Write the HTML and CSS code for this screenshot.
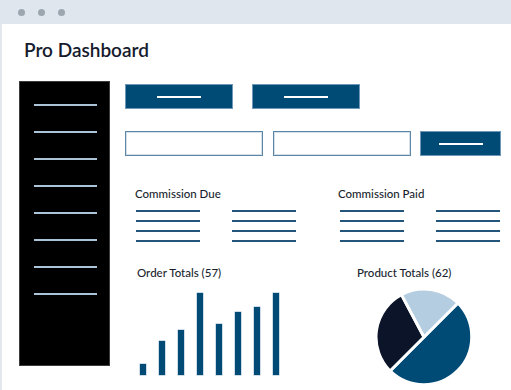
FILE: index.html
```html
<!DOCTYPE html>
<html lang="en">
<head>
  <meta charset="UTF-8" />
  <title>Pro Dashboard</title>
  <link rel="stylesheet" href="styles.css">
</head>
<body>
  <div class="window">
    <div class="titlebar">
      <span class="dot"></span>
      <span class="dot"></span>
      <span class="dot"></span>
    </div>

    <div class="page">
      <h1 class="page-title">Pro Dashboard</h1>

      <div class="layout">
        <nav class="sidebar">
          <span class="nav-line"></span>
          <span class="nav-line"></span>
          <span class="nav-line"></span>
          <span class="nav-line"></span>
          <span class="nav-line"></span>
          <span class="nav-line"></span>
          <span class="nav-line"></span>
          <span class="nav-line"></span>
        </nav>

        <main class="main">
          <div class="btn-row">
            <div class="btn btn-wide"><span class="btn-line"></span></div>
            <div class="btn btn-wide"><span class="btn-line"></span></div>
          </div>

          <div class="search-row">
            <div class="field"></div>
            <div class="field"></div>
            <div class="btn btn-small"><span class="btn-line"></span></div>
          </div>

          <div class="summary-row">
            <section class="summary">
              <h3 class="label">Commission Due</h3>
              <div class="line-cols">
                <div class="line-col">
                  <span class="row-line"></span>
                  <span class="row-line"></span>
                  <span class="row-line"></span>
                  <span class="row-line"></span>
                </div>
                <div class="line-col">
                  <span class="row-line"></span>
                  <span class="row-line"></span>
                  <span class="row-line"></span>
                  <span class="row-line"></span>
                </div>
              </div>
            </section>
            <section class="summary">
              <h3 class="label">Commission Paid</h3>
              <div class="line-cols">
                <div class="line-col">
                  <span class="row-line"></span>
                  <span class="row-line"></span>
                  <span class="row-line"></span>
                  <span class="row-line"></span>
                </div>
                <div class="line-col">
                  <span class="row-line"></span>
                  <span class="row-line"></span>
                  <span class="row-line"></span>
                  <span class="row-line"></span>
                </div>
              </div>
            </section>
          </div>

          <div class="chart-row">
            <section class="chart">
              <h3 class="label">Order Totals (57)</h3>
              <div class="bars">
                <span class="bar" style="height: 11px"></span>
                <span class="bar" style="height: 34px"></span>
                <span class="bar" style="height: 45px"></span>
                <span class="bar" style="height: 82px"></span>
                <span class="bar" style="height: 51px"></span>
                <span class="bar" style="height: 63px"></span>
                <span class="bar" style="height: 68px"></span>
                <span class="bar" style="height: 82px"></span>
              </div>
            </section>
            <section class="chart">
              <h3 class="label">Product Totals (62)</h3>
              <svg class="pie" width="100" height="100" viewBox="0 0 100 100">
                <path d="M50 50 L83.94 16.06 A48 48 0 0 1 16.06 83.94 Z" fill="#004b76" />
                <path d="M50 50 L16.06 83.94 A48 48 0 0 1 27.46 7.62 Z" fill="#0b1428" />
                <path d="M50 50 L27.46 7.62 A48 48 0 0 1 83.94 16.06 Z" fill="#b5cde0" />
              </svg>
            </section>
          </div>
        </main>
      </div>
    </div>
  </div>
</body>
</html>
```

FILE: styles.css
```css
body {
  margin: 0;
  font-family: 'Lato', 'Liberation Sans', sans-serif;
  background-color: white;
  color: #151b2d;
}
.window {
  width: 511px;
  height: 390px;
  overflow: hidden;
  display: flex;
  flex-direction: column;
}
.titlebar {
  height: 24px;
  background-color: #dfe6ed;
  display: flex;
  align-items: center;
  gap: 13px;
  padding-left: 18px;
  flex-shrink: 0;
}
.dot {
  width: 7px;
  height: 7px;
  border-radius: 50%;
  background-color: #9ba6ae;
}
.page {
  flex: 1;
  border-left: 2px solid #e3e7eb;
  padding-top: 14px;
}
.page-title {
  margin: 0 0 0 22px;
  font-size: 19px;
  line-height: 24px;
  font-weight: 600;
}
.layout {
  display: flex;
  align-items: flex-start;
  margin: 19px 0 0 17px;
}
.sidebar {
  width: 91px;
  height: 285px;
  box-sizing: border-box;
  background-color: #000;
  border: 1px solid #3c3c3c;
  padding: 22px 0 0 14px;
  display: flex;
  flex-direction: column;
  gap: 25px;
  flex-shrink: 0;
}
.nav-line {
  width: 63px;
  height: 2px;
  background-color: #abc4d8;
}
.main {
  margin: 3px 0 0 15px;
  width: 376px;
}
.btn-row {
  display: flex;
  gap: 19px;
}
.btn {
  height: 25px;
  box-sizing: border-box;
  background-color: #004b76;
  border: 1px solid #6f97b7;
  display: flex;
  align-items: center;
  justify-content: center;
}
.btn-wide {
  width: 108px;
}
.btn-small {
  width: 81px;
}
.btn-line {
  width: 44px;
  height: 2px;
  background-color: white;
}
.search-row {
  display: flex;
  margin-top: 22px;
}
.field {
  width: 138px;
  height: 25px;
  box-sizing: border-box;
  border: 1px solid #5b86a8;
  box-shadow: inset 0 0 0 1px #d3e0ea;
  margin-right: 10px;
}
.field + .field {
  margin-right: 9px;
}
.summary-row {
  display: grid;
  grid-template-columns: 203px 1fr;
  padding-left: 10px;
  margin-top: 31px;
}
.label {
  margin: 0;
  font-size: 11.5px;
  line-height: 13px;
  font-weight: 500;
  color: #1a1f2e;
}
.line-cols {
  display: flex;
  gap: 32px;
  margin: 10px 0 0 1px;
}
.line-col {
  display: flex;
  flex-direction: column;
  gap: 8px;
  width: 64px;
}
.summary + .summary .line-cols {
  margin-left: 2px;
}
.row-line {
  height: 2px;
  background-color: #24557a;
}
.chart-row {
  display: grid;
  grid-template-columns: 220px 1fr;
  padding-left: 12px;
  margin-top: 24px;
}
.bars {
  display: flex;
  align-items: flex-end;
  gap: 13px;
  height: 82px;
  margin: 14px 0 0 3px;
}
.bar {
  width: 6px;
  background-color: #004b76;
  box-shadow: 0 0 0 0.5px #9dbad0;
}
.pie {
  display: block;
  margin: 8px 0 0 17px;
}
.pie path {
  stroke: white;
  stroke-width: 3;
  stroke-linejoin: round;
}
```
